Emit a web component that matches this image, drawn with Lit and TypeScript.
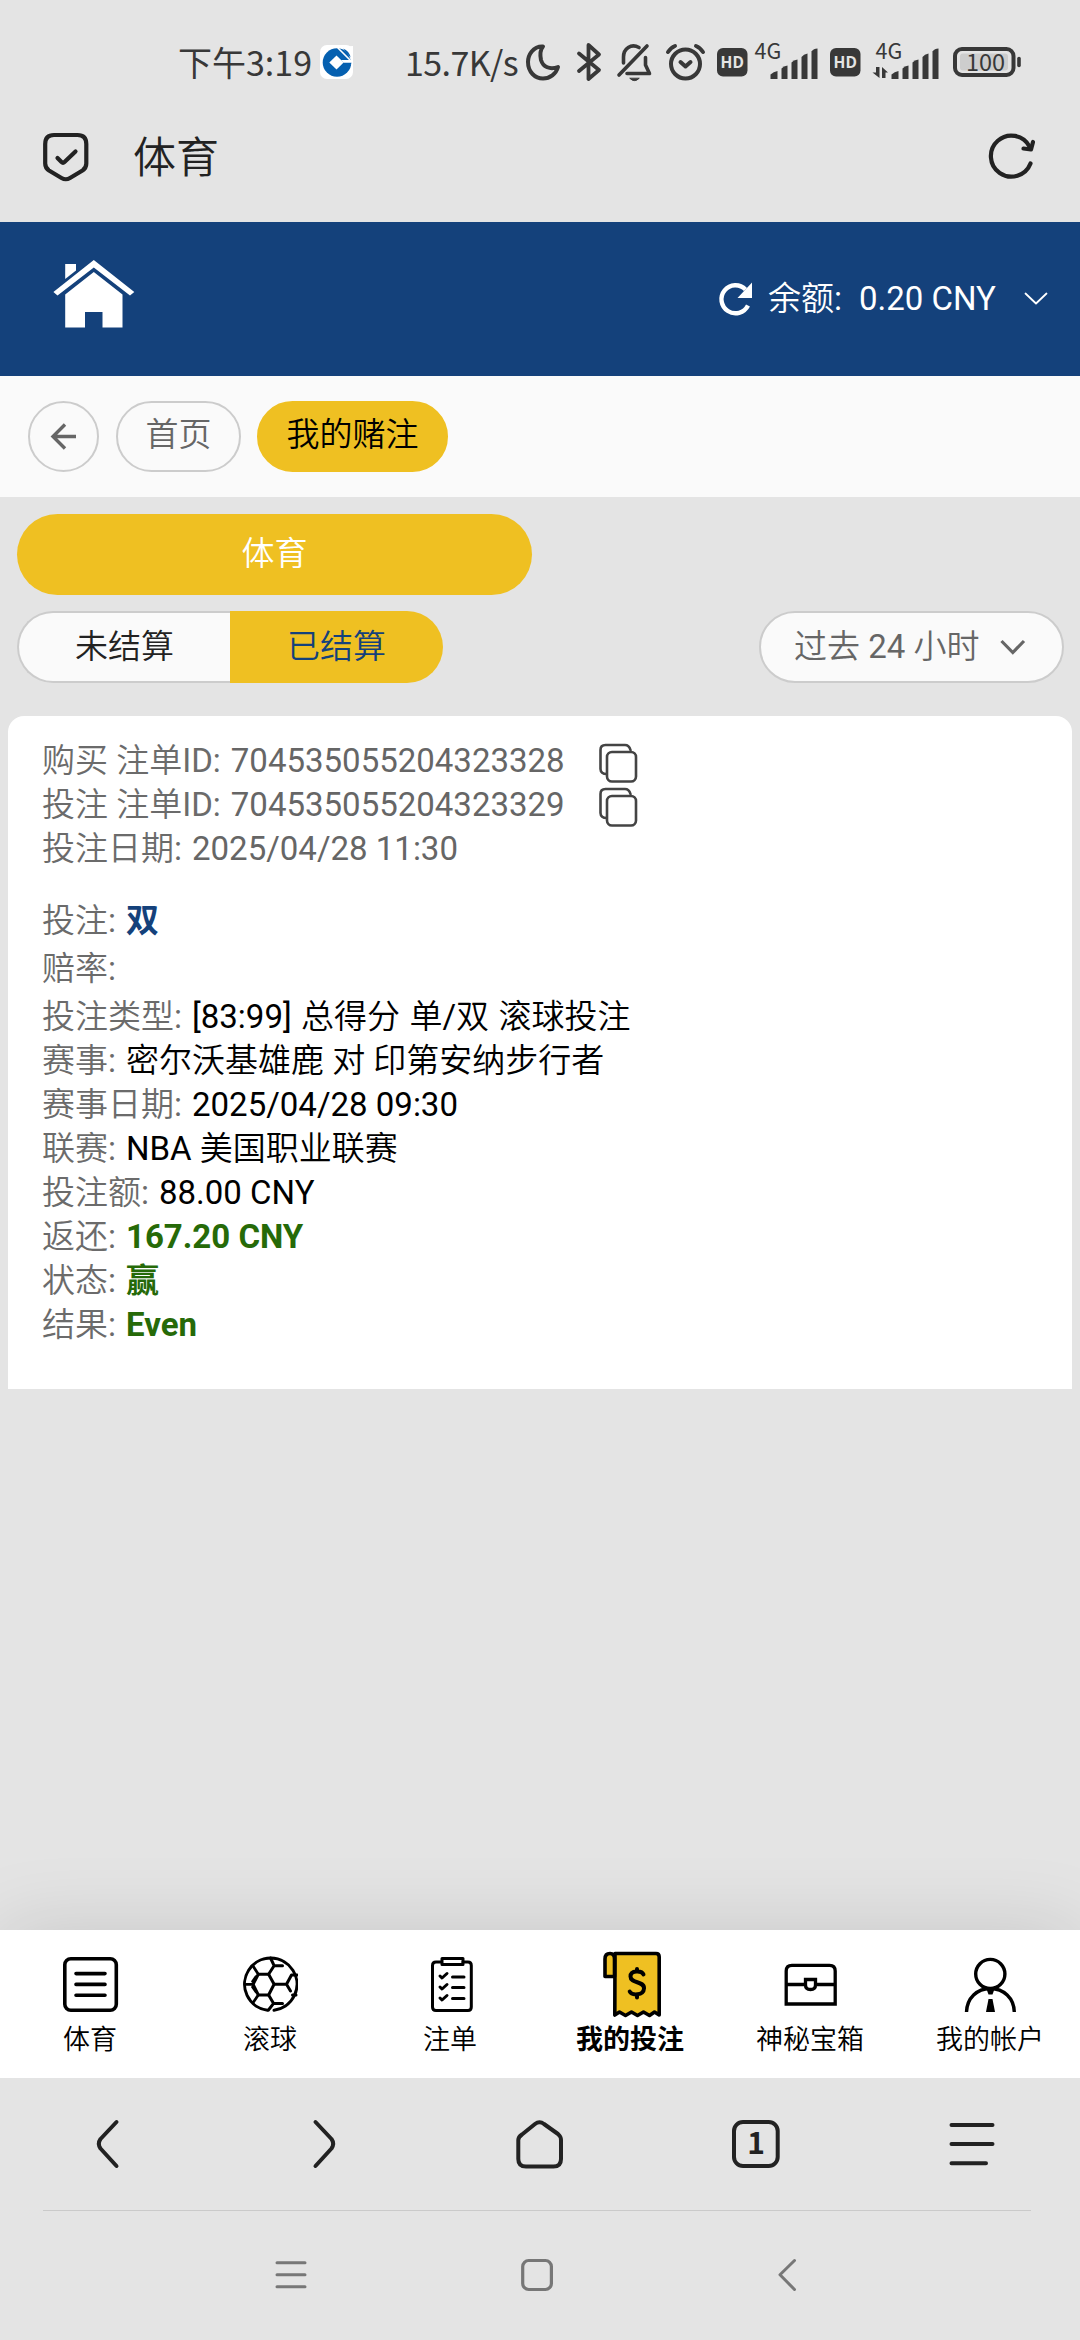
import { LitElement, html, css, svg, type SVGTemplateResult } from "lit";
import { customElement, property } from "lit/decorators.js";
import { classMap } from "lit/directives/class-map.js";

/** Builds an icon whose drawing uses the screen's own coordinate space. */
const icon = (x: number, y: number, w: number, h: number, body: SVGTemplateResult) => html`<svg
  width=${w}
  height=${h}
  viewBox="${x} ${y} ${w} ${h}"
  fill="none"
  stroke="currentColor"
  stroke-linecap="round"
  stroke-linejoin="round"
>${body}</svg>`;

const bars = (x: number) => svg`<g stroke="none" fill="currentColor">
  <path d="M${x} 78V73.500Q${x + 3} 70.500 ${x + 7} 70V78Z"/>
  <path d="M${x + 11} 78V67.500Q${x + 13} 65 ${x + 17} 64.500V78Z"/>
  <path d="M${x + 21} 78V61.500Q${x + 23} 59 ${x + 27} 58.500V78Z"/>
  <path d="M${x + 31} 78V56Q${x + 33} 53 ${x + 37} 52.500V78Z"/>
  <path d="M${x + 41} 78V50.500Q${x + 43} 47.500 ${x + 47} 47.500V78Z"/></g>`;

const hd = (x: number) => icon(x, 48, 31, 29, svg`
  <rect x=${x} y="48" width="30.500" height="28.500" rx="6" fill="currentColor" stroke="none"/>
  <text class="hd" x=${x + 15.2} y="68" text-anchor="middle">HD</text>`);

const copyIcon = icon(597, 742, 40, 40, svg`<g stroke-width="2.600">
  <path d="M605.500 773C602 773 599.500 771 599.500 768V749Q599.500 744 604.500 744H624Q628 744 629.500 749"/>
  <rect x="606" y="751" width="29" height="29.500" rx="5"/></g>`);

const navIcons: Record<string, unknown> = {
  sports: icon(61, 1950, 58, 68, svg`<g stroke-width="3.600">
    <rect x="64.800" y="1958.800" width="51.500" height="51.500" rx="6"/>
    <path d="M76 1973.600H105M76 1984.400H105M76 1995.300H105"/></g>`),
  live: icon(242, 1950, 56, 68, svg`<g stroke-width="3">
    <path d="M267.500 2010.300A26.200 26.200 0 1 1 274 2010.300"/>
    <path d="M253.100 1984.300L258.300 1974.300H268.600L274.100 1984.300L268.600 1995H258.300Z"/>
    <path d="M258.300 1974.300L253.500 1966.700M258.300 1995L253.500 2002M253.100 1984.300H246" stroke-width="2.800"/>
    <path d="M256 1976.500L252.500 1981.500M252.500 1987L256 1992" stroke-width="2.600"/>
    <path d="M268.600 1974.300L274.100 1965.700L270.500 1958M274.100 1965.700H282.500M268.600 1995L273.600 2003.400H282.500M273.600 2003.400L268.500 2010"/>
    <path d="M274.100 1984.300H286.500L291.500 1975H297M286.500 1984.300L290.500 1991M292.500 1995H296"/></g>`),
  slip: icon(426, 1950, 48, 68, svg`<g stroke-width="3">
    <path d="M441.500 1962H436Q432.500 1962 432.500 1965.500V2007Q432.500 2010.500 436 2010.500H468Q471.300 2010.500 471.300 2007V1965.500Q471.300 1962 468 1962H463"/>
    <path d="M442 1958.500H463V1964.500H442Z"/>
    <path d="M452.500 1977H464M452.500 1987.500H464M452.500 1998.500H464"/>
    <path d="M440 1976L442 1978L447 1973.500M440 1987L442 1989L447 1984.500M440 1998L442 2000L447 1995.500"/></g>`),
  mybets: icon(598, 1950, 64, 68, svg`<g stroke-width="3.600">
    <path d="M615 1953.500H656Q659.200 1953.500 659.200 1957V2015L654.500 2012L649.500 2015.500L643.500 2012L637.500 2015.500L631.500 2012L625.500 2015.500L619.500 2012L614.800 2015Z" fill="#efc022"/>
    <path d="M614.500 1976.500H605V1959Q605 1953.500 610 1953.500Q614.500 1953.500 614.500 1959Z" fill="#efc022"/>
    <path d="M643.500 1974.500C642 1970.500 630.500 1970 630.500 1976.500C630.500 1984 644.500 1980.500 644 1988.500C643.500 1996 631.500 1995.500 629.700 1991.500M637 1969V1971M637 1995V1997.500" stroke-width="4"/></g>`),
  chest: icon(780, 1950, 60, 68, svg`<g stroke-width="3.300" stroke-linejoin="miter" stroke-linecap="butt">
    <path d="M786.200 2004V1971Q786.200 1965.300 792 1965.300H829.500Q835.200 1965.300 835.200 1971V2004Z"/>
    <path d="M786 1984.500H804M817 1984.500H835"/>
    <path d="M805.500 1979.500H815.500V1985Q815.500 1989.500 810.500 1989.500Q805.500 1989.500 805.500 1985Z"/></g>`),
  account: icon(962, 1950, 56, 68, svg`<g stroke-width="3.400" stroke-linecap="butt">
    <circle cx="990.300" cy="1974" r="14.600"/>
    <path d="M966.500 2012C967 1998 977 1988.500 990.300 1988.500S1014 1998 1014.300 2012"/>
    <path d="M986.500 1989H994.500L992.500 1994.500H988.500Z" fill="currentColor" stroke="none"/>
    <path d="M988.500 1999H992.500L995 2012H986Z" fill="currentColor" stroke="none"/></g>`),
};

interface Row { label: string; value: string; tone?: string; copy?: boolean }

const idRows: Row[] = [
  { label: "购买 注单ID:", value: "704535055204323328", tone: "muted", copy: true },
  { label: "投注 注单ID:", value: "704535055204323329", tone: "muted", copy: true },
  { label: "投注日期:", value: "2025/04/28 11:30", tone: "muted" },
];

const pickRows: Row[] = [
  { label: "投注:", value: "双", tone: "pick" },
  { label: "赔率:", value: "" },
];

const detailRows: Row[] = [
  { label: "投注类型:", value: "[83:99] 总得分 单/双 滚球投注", tone: "spaced" },
  { label: "赛事:", value: "密尔沃基雄鹿 对 印第安纳步行者" },
  { label: "赛事日期:", value: "2025/04/28 09:30" },
  { label: "联赛:", value: "NBA 美国职业联赛" },
  { label: "投注额:", value: "88.00 CNY" },
  { label: "返还:", value: "167.20 CNY", tone: "win" },
  { label: "状态:", value: "赢", tone: "win" },
  { label: "结果:", value: "Even", tone: "win" },
];

const navItems = [
  { key: "sports", label: "体育" },
  { key: "live", label: "滚球" },
  { key: "slip", label: "注单" },
  { key: "mybets", label: "我的投注" },
  { key: "chest", label: "神秘宝箱" },
  { key: "account", label: "我的帐户" },
];

@customElement("bet-card")
export class BetCard extends LitElement {
  static styles = css`
    :host { display: block; box-sizing: border-box; background: #fff; border-radius: 16px 16px 0 0; padding: 23px 34px 42px; }
    .group { display: flex; flex-direction: column; }
    .pick-group { gap: 4px; margin: 28px 0 4px; }
    .row { display: flex; align-items: center; height: 44px; white-space: nowrap; line-height: 44px; color: #000; }
    .label { color: #6b6b6b; margin-right: 10px; }
    .muted { color: #666; }
    .spaced { word-spacing: 1.2px; }
    .pick, .win { font-family: Roboto, "Noto Sans CJK SC", sans-serif; font-weight: 700; }
    .pick { color: #14417b; }
    .win { color: #266a08; }
    .copy { display: flex; margin: 3px 0 0 33px; color: #444; }
    svg { display: block; }
  `;

  private row(r: Row) {
    return html`<div class="row">
      <span class="label">${r.label}</span>
      <span class=${r.tone ?? "plain"}>${r.value}</span>
      ${r.copy ? html`<span class="copy">${copyIcon}</span>` : ""}
    </div>`;
  }

  render() {
    return html`
      <div class="group">${idRows.map((r) => this.row(r))}</div>
      <div class="group pick-group">${pickRows.map((r) => this.row(r))}</div>
      <div class="group">${detailRows.map((r) => this.row(r))}</div>
    `;
  }
}

@customElement("bottom-tabs")
export class BottomTabs extends LitElement {
  @property() active = "mybets";

  static styles = css`
    :host { display: grid; grid-template-columns: repeat(6, 1fr); height: 148px; background: #fff; box-shadow: 0 0 80px rgba(0, 0, 0, 0.13); clip-path: inset(-120px 0 0 0); }
    .tab { display: flex; flex-direction: column; align-items: center; padding-top: 20px; color: #000; }
    .label { font-size: 27px; line-height: 34px; margin-top: 5px; white-space: nowrap; }
    .active .label { font-family: Roboto, "Noto Sans CJK SC", sans-serif; font-weight: 700; }
    svg { display: block; }
  `;

  render() {
    return navItems.map(
      (n) => html`<div class=${classMap({ tab: true, active: n.key === this.active })}>
        ${navIcons[n.key]}<span class="label">${n.label}</span>
      </div>`
    );
  }
}

@customElement("app-root")
export class AppRoot extends LitElement {
  static styles = css`
    :host { display: flex; flex-direction: column; width: 1080px; height: 2340px; overflow: hidden; background: #e4e4e4; font-family: Roboto, "Noto Sans CJK SC DemiLight", "Noto Sans CJK SC", sans-serif; font-size: 33px; }
    svg { display: block; flex: none; overflow: visible; }

    .status { display: flex; align-items: center; height: 60px; padding: 32px 0 0 178px; color: #383838; font-family: "Noto Sans CJK SC", sans-serif; white-space: nowrap; }
    .clock { width: 142px; font-size: 34px; line-height: 60px; }
    .speed { width: 121px; margin-left: 52px; font-size: 34px; line-height: 60px; letter-spacing: -0.6px; }
    .bt { margin-left: 15px; }
    .bell { margin-left: 15px; }
    .alarm { margin-left: 14px; }
    .hd1 { margin-left: 12px; }
    .sig1 { margin-left: 6px; }
    .hd2 { margin-left: 11px; }
    .sig2 { margin-left: 11px; }
    .batt { margin-left: 13px; }
    .hd { font: 700 15.5px "Open Sans", "Noto Sans", sans-serif; fill: #e4e4e4; stroke: none; }
    .net { font: 400 21.500px "Noto Sans CJK SC", sans-serif; fill: currentColor; stroke: none; }
    .pct { font: 400 23.500px "Noto Sans CJK SC", sans-serif; fill: currentColor; stroke: none; }

    .titlebar { display: flex; align-items: center; height: 130px; padding: 0 44px 0 42px; color: #222; }
    .title { flex: 1; margin: 2px 0 0 43px; font-size: 43px; line-height: 56px; }

    .header { display: flex; align-items: center; height: 154px; padding: 0 32px 0 52px; background: #14417b; color: #fff; white-space: nowrap; }
    .house { margin-bottom: 10px; }
    .balance { display: flex; align-items: center; margin-left: auto; line-height: 48px; }
    .amount { width: 135px; margin: -1px 30px 0 18px; }
    .balance-label { width: 73px; margin: -1px 0 0 15px; }

    .crumbs { display: flex; align-items: flex-start; gap: 16px; height: 96px; padding: 25px 28px 0; background: #fafafa; }
    .crumb { display: flex; align-items: center; justify-content: center; box-sizing: border-box; height: 71px; width: 125px; border: 2px solid #ccc; border-radius: 36px; color: #666; line-height: 44px; padding-bottom: 4px; }
    .crumb.back { width: 71px; padding: 0; margin-right: 1px; }
    .crumb.current { width: 191px; border-color: #efc022; background: #efc022; color: #000; }

    .filters { display: flex; flex-direction: column; gap: 16px; padding: 17px 16px 33px 17px; }
    .sport { display: flex; align-items: center; justify-content: center; width: 515px; height: 81px; box-sizing: border-box; padding-bottom: 7px; border-radius: 41px; background: #efc022; color: #fff; }
    .line { display: flex; justify-content: space-between; height: 72px; }
    .segments { display: flex; }
    .seg { display: flex; align-items: center; justify-content: center; box-sizing: border-box; width: 213px; padding-bottom: 6px; border: 2px solid #ccc; border-right: 0; border-radius: 36px 0 0 36px; background: #fafafa; color: #222; }
    .seg.on { border: 0; border-radius: 0 36px 36px 0; background: #efc022; color: #14417b; }
    .range { display: flex; align-items: center; justify-content: space-between; box-sizing: border-box; width: 305px; padding: 0 36px 0 33px; border: 2px solid #ccc; border-radius: 36px; background: #fafafa; color: #666; }
    .range-text { margin-top: -7px; white-space: nowrap; }

    .card { margin: 0 8px; }
    .spacer { flex: 1; }

    .browser { display: grid; grid-template-columns: repeat(5, 1fr); align-items: center; justify-items: center; height: 132px; color: #222; }
    .rule { height: 1px; margin: 0 49px 0 43px; background: #cacaca; }
    .system { display: flex; align-items: center; height: 127px; padding: 0 0 2px 275px; color: #777; }
    .sys-home { margin-left: 214px; }
    .sys-back { margin-left: 223px; }
    .tabcount { font: 700 30px "Noto Sans CJK SC", sans-serif; fill: currentColor; stroke: none; }
  `;

  private renderStatus() {
    return html`<div class="status">
      <span class="clock">下午3:19</span>
      ${icon(320, 45, 33, 34, svg`<g stroke="none">
        <rect x="320" y="45" width="33" height="34" rx="7" fill="#fff"/>
        <circle cx="337" cy="62.500" r="14.300" fill="#0560b0"/>
        <path d="M329.300 62.500L336.500 55.500L343.700 62.500L336.500 69.500Z" fill="#fff"/>
        <path d="M341 60L345.500 64.500H352.500V60Z" fill="#fff"/>
        <path d="M344 62.800H351.500L350.500 65.500H342.500Z" fill="#0560b0"/>
        <path d="M345 46.500L353 46V60L351 60.500Z" fill="#fff"/>
        <path d="M343 48.500Q349.500 51 350.500 57.500Z" fill="#0560b0"/>
        <path d="M338 48L350 60" stroke="#fff" stroke-width="1.600"/></g>`)}
      <span class="speed">15.7K/s</span>
      ${icon(526, 43, 35, 38, svg`<path stroke-width="4" d="M543 46.500C533 46 528 55 528 62C528 72 535 78.500 543 78.500C550 78.500 556 74 558 67C550 70 543 67 541 60C540 55 540 50 543 46.500Z"/>`)}
      <span class="bt">${icon(575, 43, 26, 38, svg`<path stroke-width="3.800" d="M578 53.500L598 70L587.500 79V45L598 54.500L578 71"/>`)}</span>
      <span class="bell">${icon(616, 43, 35, 39, svg`<g stroke-width="3.600">
        <path d="M618 75L646 46"/><path d="M638 47.500C630 43 622.500 49 622.500 57V63"/>
        <path d="M644.500 57.500V65L648.500 73.500H626"/><path d="M629 78.500Q633.500 83 638 78.500Z" fill="currentColor" stroke-width="1"/></g>`)}</span>
      <span class="alarm">${icon(665, 43, 39, 38, svg`<g stroke-width="4">
        <circle cx="684.500" cy="64" r="14.500"/><path d="M667 52Q670 47.500 674 46M702 52Q699 47.500 695 46"/><path d="M679.500 62L684.500 66.500L689.500 62"/></g>`)}</span>
      <span class="hd1">${hd(716.5)}</span>
      <span class="sig1">${icon(753, 40, 65, 42, svg`<text class="net" x="753.500" y="58">4G</text>${bars(769.5)}`)}</span>
      <span class="hd2">${hd(829)}</span>
      <span class="sig2">${icon(871, 40, 68, 42, svg`<text class="net" x="874.500" y="58">4G</text>
        <path d="M878.500 66V77L871.500 71.500H875V66ZM881 77V66L887 71.500H884.500V77Z" fill="currentColor" stroke="none"/>${bars(890.5)}`)}</span>
      <span class="batt">${icon(952, 46, 69, 32, svg`
        <rect x="959" y="53.500" width="48" height="17" rx="3" fill="#cdcdcd" stroke="none"/>
        <rect x="954" y="49" width="58.500" height="26" rx="7" stroke-width="4"/>
        <path d="M1018 58.500V65.500" stroke-width="3.600"/>
        <text class="pct" x="984.500" y="71" text-anchor="middle">100</text>`)}</span>
    </div>`;
  }

  render() {
    return html`
      ${this.renderStatus()}
      <div class="titlebar">
        ${icon(42, 132, 48, 50, svg`<g stroke-width="4.200">
          <path d="M54 135H77.500Q86.300 135 86.300 144V163.500Q86.300 168 82.500 170.500L70 178Q65.800 180.500 61.500 178L49 170.500Q45.200 168 45.200 163.500V144Q45.200 135 54 135Z"/>
          <path d="M57.500 158L61.500 162Q63 163.500 64.500 162L75.500 151.500"/></g>`)}
        <span class="title">体育</span>
        ${icon(988, 133, 48, 48, svg`<g stroke-width="4.200">
          <path d="M1030.500 163.500A20.500 20.500 0 1 1 1029.500 146.500"/>
          <path d="M1023.500 148.500L1031 149.500L1033 142"/></g>`)}
      </div>

      <div class="header">
        <span class="house">${icon(52, 259, 84, 70, svg`<g fill="#fff" stroke="none">
          <path d="M53.400 292L93.800 260L134.300 292L130 295.500L93.800 267.500L57.500 295.500Z"/>
          <path d="M65.200 264H76V270.500L65.200 279Z"/>
          <path d="M65.200 294.500L93.800 272L122.500 294.500V327.500H102.500V312H85V327.500H65.200Z"/></g>`)}</span>
        <div class="balance">
          ${icon(717, 282, 35, 35, svg`<path d="M747 305.500A14 14 0 1 1 744.500 289.500" stroke-width="4.400" stroke-linecap="butt"/><path d="M751 282.500V298H736.500Z" fill="currentColor" stroke="none"/>`)}
          <span class="balance-label">余额:</span><span class="amount">0.20 CNY</span>
          ${icon(1024, 290, 24, 20, svg`<path d="M1025.500 294.500L1036 304.500L1046.500 294.500" stroke-width="1.800"/>`)}
        </div>
      </div>

      <div class="crumbs">
        <div class="crumb back">${icon(50, 422, 28, 30, svg`<path d="M76 436.500H53M65 424.500L53 436.500L65 448.500" stroke-width="3.400" stroke-linecap="butt" stroke-linejoin="miter"/>`)}</div>
        <div class="crumb">首页</div>
        <div class="crumb current">我的赌注</div>
      </div>

      <div class="filters">
        <div class="sport">体育</div>
        <div class="line">
          <div class="segments"><div class="seg">未结算</div><div class="seg on">已结算</div></div>
          <div class="range"><span class="range-text">过去 24 小时</span>
            ${icon(1000, 636, 27, 20, svg`<path d="M1002.500 640L1013.800 651.500L1025 640" stroke-width="3.200" stroke-linecap="butt" stroke-linejoin="miter"/>`)}</div>
        </div>
      </div>

      <bet-card class="card"></bet-card>
      <div class="spacer"></div>
      <bottom-tabs></bottom-tabs>

      <div class="browser">
        ${icon(96, 2119, 24, 50, svg`<path d="M116.500 2122L100.500 2139Q97.200 2143.700 100.500 2148.500L116.500 2166" stroke-width="4"/>`)}
        ${icon(312, 2119, 24, 50, svg`<path d="M315.500 2122L331.500 2139Q334.800 2143.700 331.500 2148.500L315.500 2166" stroke-width="4"/>`)}
        ${icon(515, 2119, 50, 50, svg`<path d="M522 2134.500L535 2124Q539.500 2120.500 544 2124L558 2134Q561 2136.500 561 2140V2159Q561 2166.500 553.500 2166.500H526Q518.300 2166.500 518.300 2159V2140Q518.300 2137 522 2134.500Z" stroke-width="4"/>`)}
        ${icon(731, 2119, 50, 50, svg`<rect x="734" y="2122" width="43.700" height="44" rx="9" stroke-width="4"/><text class="tabcount" x="756" y="2154" text-anchor="middle">1</text>`)}
        ${icon(948, 2119, 48, 50, svg`<path d="M951.500 2125H992.500M951.500 2144H992.500M951.500 2163.200H986" stroke-width="4"/>`)}
      </div>
      <div class="rule"></div>
      <div class="system">
        ${icon(275, 2258, 32, 34, svg`<path d="M277 2262.700H305M277 2274.700H305M277 2286.700H305" stroke-width="3"/>`)}
        <span class="sys-home">${icon(521, 2258, 33, 34, svg`<rect x="522.700" y="2260.500" width="28.700" height="29" rx="6" stroke-width="3.200"/>`)}</span>
        <span class="sys-back">${icon(777, 2258, 20, 34, svg`<path d="M794.500 2260.500L780 2274.700L794.500 2289.500" stroke-width="3"/>`)}</span>
      </div>
    `;
  }
}
